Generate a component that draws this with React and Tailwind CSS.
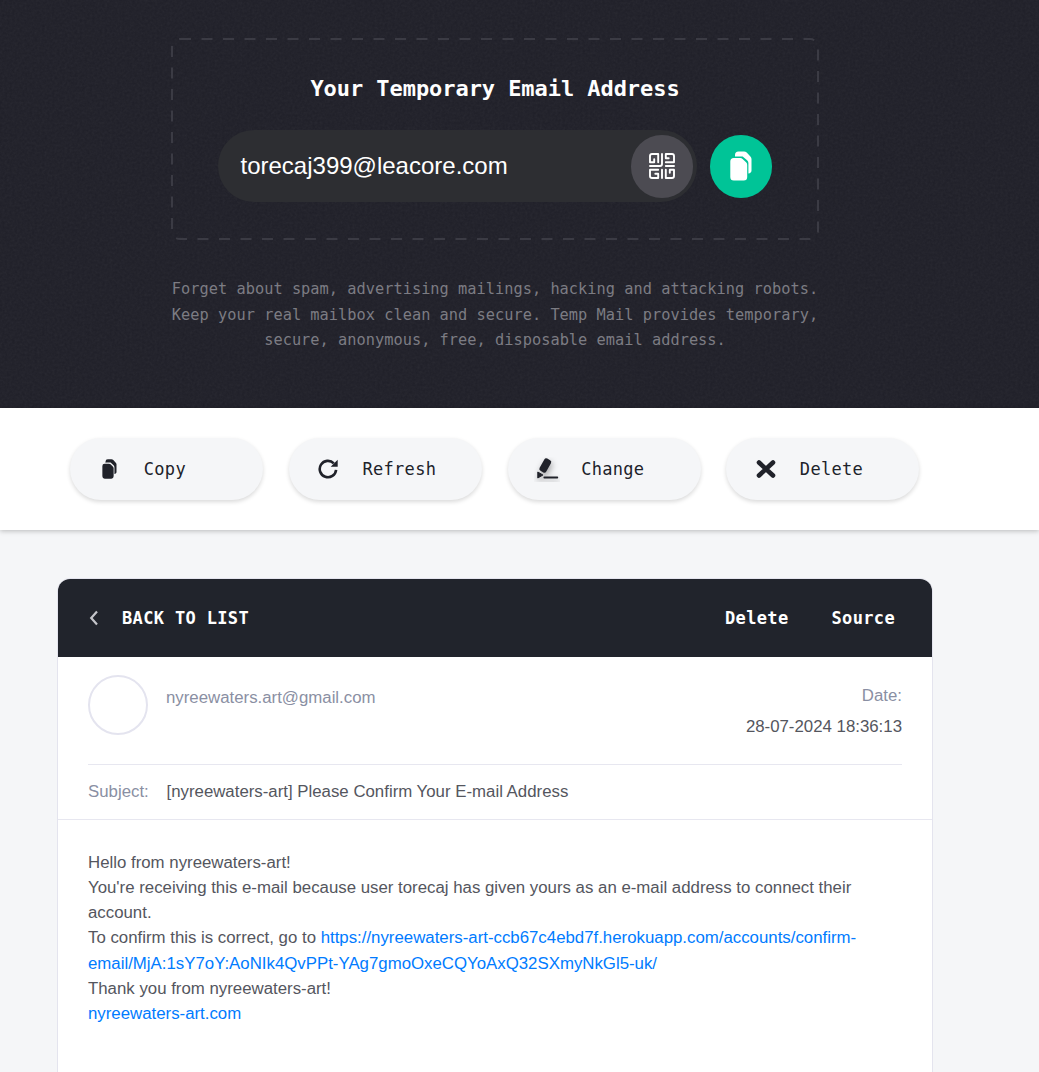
const mono = "font-['DejaVu_Sans_Mono',monospace]";

function CopyIcon({ className }) {
  return (
    <svg viewBox="0 0 22 30" className={className} fill="currentColor">
      <path d="M5 5.500V4a3.500 3.500 0 0 1 3.500-3.500h5.500c1 0 2 .4 2.700 1.100l3.700 3.900c.7.7 1.100 1.500 1.100 2.500v11.500c0 1.600-1.300 2.900-2.900 2.900h-.2V12.200c0-1.200-.5-2.200-1.300-3L12.600 5.400H7z" />
      <path d="M.3 10.500a3.500 3.500 0 0 1 3.500-3.500h6.500c.9 0 1.700.3 2.300.9l3.700 3.700c.6.6.9 1.400.9 2.300v12.100a3.500 3.500 0 0 1-3.500 3.500H3.800A3.500 3.500 0 0 1 .3 26z" />
    </svg>
  );
}

function QrIcon() {
  return (
    <svg viewBox="0 0 26 26" className="size-[26px]" fill="none" stroke="white" strokeWidth="1.900" strokeLinejoin="round" strokeLinecap="round">
      <path d="M5.200 6.300V9.200H1V3Q1 1 3 1H9.200V9.200" />
      <path d="M19.700 5.200H16.800V1H23Q25 1 25 3V9.200H16.800" />
      <path d="M6.300 20.800H9.200V25H3Q1 25 1 23V16.800H9.200" />
      <path d="M20.800 19.700V16.800H25V23Q25 25 23 25H16.800V16.800" />
      <path d="M13 1V11Q13 13 11 13H1M16.800 13H25M13 16.800V25" />
    </svg>
  );
}

function RefreshIcon() {
  return (
    <svg viewBox="0 0 20 20" className="h-5 w-5" fill="none" stroke="currentColor" strokeWidth="2.600">
      <path d="M18.100 10.800A8.200 8.200 0 1 1 15.800 4.300" />
      <path d="M19.700.8v6.900h-7z" fill="currentColor" stroke="none" />
    </svg>
  );
}

function ChangeIcon() {
  return (
    <svg viewBox="0 0 26 25" className="h-[25px] w-[26px] overflow-hidden" fill="currentColor">
      <g className="drop-shadow-[1px_3px_3px_rgba(0,0,0,0.35)]">
        <rect x="-3.800" y="-7" width="7.600" height="14" rx="2.200" transform="translate(11.300 8.500) rotate(29)" />
        <path d="M3.800 15 8.900 18l-5.100 3z" stroke="currentColor" strokeLinejoin="round" />
        <path d="M10.300 20.500h13" stroke="currentColor" strokeWidth="1.800" strokeLinecap="round" />
      </g>
    </svg>
  );
}

function DeleteIcon() {
  return (
    <svg viewBox="0 0 20 20" className="h-5 w-5" fill="none" stroke="currentColor" strokeWidth="4.600" strokeLinecap="round">
      <path d="M3 3.500 17 16.500M17 3.500 3 16.500" />
    </svg>
  );
}

function Action({ icon, label }) {
  return (
    <button className="flex h-[62px] w-[193px] items-center rounded-full bg-[#f5f6f8] text-[#20222a] shadow-[0_2px_4px_rgba(0,0,0,0.15)]">
      <span className="ml-[26.500px] flex w-[26px] justify-center">{icon}</span>
      <span className={"mt-px ml-[21px] text-[17px] tracking-[0.3px] " + mono}>{label}</span>
    </button>
  );
}

export default function App() {
  return (
    <div className="h-[1072px] w-[1039px] overflow-hidden bg-[#f5f6f8] font-['Liberation_Sans',Arial,sans-serif]">
      <header className="relative h-[408px] bg-[#1f1f28] pt-[38px]">
        <svg className="pointer-events-none absolute inset-0 h-full w-full opacity-[0.06]">
          <filter id="grain">
            <feTurbulence type="fractalNoise" baseFrequency="0.4" numOctaves="3" stitchTiles="stitch" />
            <feColorMatrix type="saturate" values="0" />
          </filter>
          <rect width="100%" height="100%" filter="url(#grain)" />
        </svg>
        <div className="relative ml-[171px] h-[202px] w-[648px]">
          <svg className="absolute inset-0 h-full w-full" fill="none">
            <rect x="1" y="1" width="646" height="200" rx="8" stroke="#3b3b44" strokeWidth="2" strokeDasharray="11 10.500" />
          </svg>
          <h1 className={"pt-[35px] text-center text-[22px] leading-8 font-bold tracking-[-0.06px] text-white " + mono}>
            Your Temporary Email Address
          </h1>
          <div className="mt-[25px] ml-[47px] flex items-center">
            <div className="flex h-[72px] w-[479px] items-center justify-between rounded-full bg-[#2d2e32] pr-[4px] pl-[22.500px]">
              <span className="text-[24px] text-white">torecaj399@leacore.com</span>
              <button className="flex h-[63px] w-[62px] items-center justify-center rounded-full bg-[#4c4b52]">
                <QrIcon />
              </button>
            </div>
            <button className="ml-[13px] flex h-[63px] w-[62px] items-center justify-center rounded-full bg-[#00c497] text-white">
              <CopyIcon className="h-[30px] w-[22px]" />
            </button>
          </div>
        </div>
        <p className={"relative mt-[37px] ml-[165px] w-[660px] text-center text-[15.300px] leading-[25.500px] tracking-[0.023px] text-[#7c7c83] " + mono}>
          Forget about spam, advertising mailings, hacking and attacking robots.
          <br />
          Keep your real mailbox clean and secure. Temp Mail provides temporary,
          <br />
          secure, anonymous, free, disposable email address.
        </p>
      </header>

      <nav className="relative flex h-[122px] gap-[25.700px] bg-white pt-[30px] pl-[70.300px] shadow-[0_1px_5px_rgba(0,0,0,0.25)]">
        <Action icon={<CopyIcon className="h-5 w-[15px]" />} label="Copy" />
        <Action icon={<RefreshIcon />} label="Refresh" />
        <Action icon={<ChangeIcon />} label="Change" />
        <Action icon={<DeleteIcon />} label="Delete" />
      </nav>

      <main className="mt-[48px] ml-[57px] h-[520px] w-[876px] overflow-hidden rounded-t-[13px] border border-[#e4e4ee] bg-white text-[16.820px] text-[#54565e]">
        <div className={"flex h-[78px] items-center bg-[#21242c] pr-[37px] pl-[31px] text-[17px] font-bold tracking-[0.35px] text-white " + mono}>
          <svg viewBox="0 0 10 16" className="h-4 w-2.5" fill="none" stroke="#c4c5ca" strokeWidth="2.200">
            <path d="M8 1.500 2.200 8 8 14.500" />
          </svg>
          <span className="mt-0.5 ml-[23px]">BACK TO LIST</span>
          <span className="mt-0.5 ml-auto">Delete</span>
          <span className="mt-0.5 ml-[43px]">Source</span>
        </div>
        <section className="px-[30px]">
          <div className="flex h-[108px] border-b border-[#e7e7f0] pt-[18px]">
            <div className="size-[60px] rounded-full border-2 border-[#e4e4ef]" />
            <span className="mt-[10px] ml-[18px] text-[#8a8fa3]">nyreewaters.art@gmail.com</span>
            <div className="mt-[5px] ml-auto text-right leading-[31px]">
              <div className="text-[#8a8fa3]">Date:</div>
              <div>28-07-2024 18:36:13</div>
            </div>
          </div>
        </section>
        <div className="flex h-[55px] items-center border-b border-[#e7e7f0] px-[30px]">
          <span className="w-[78.500px] text-[#8a8fa3]">Subject:</span>
          <span>[nyreewaters-art] Please Confirm Your E-mail Address</span>
        </div>
        <article className="px-[30px] pt-[29.800px] leading-[25.200px]">
          Hello from nyreewaters-art!
          <br />
          You're receiving this e-mail because user torecaj has given yours as an e-mail address to connect their
          <br />
          account.
          <br />
          To confirm this is correct, go to{" "}
          <a className="text-[#007bff]">
            https://nyreewaters-art-ccb67c4ebd7f.herokuapp.com/accounts/confirm-
            <br />
            email/MjA:1sY7oY:AoNIk4QvPPt-YAg7gmoOxeCQYoAxQ32SXmyNkGl5-uk/
          </a>
          <br />
          Thank you from nyreewaters-art!
          <br />
          <a className="text-[#007bff]">nyreewaters-art.com</a>
        </article>
      </main>
    </div>
  );
}
